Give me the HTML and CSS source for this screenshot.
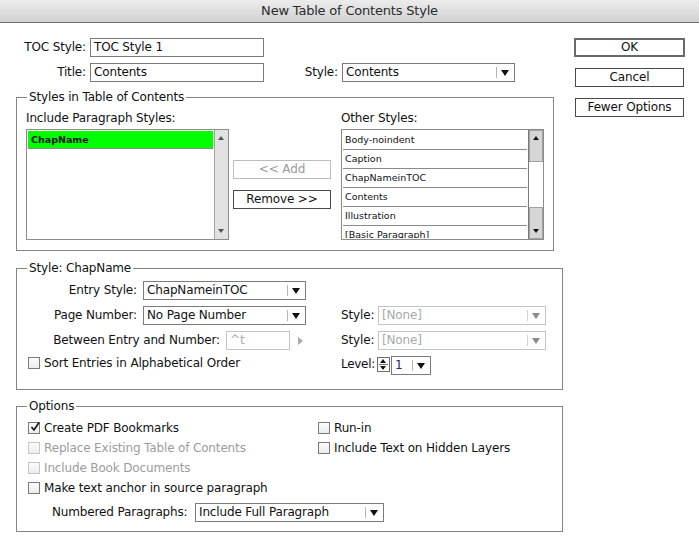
FILE: index.html
```html
<!DOCTYPE html>
<html>
<head>
<meta charset="utf-8">
<link rel="stylesheet" href="styles.css">
</head>
<body>
<div class="titlebar">New Table of Contents Style</div>
<div class="dialog">
  <div class="main">
    <div class="toprow">
      <span class="lbl toplbl">TOC Style:</span>
      <div class="field w174">TOC Style 1</div>
    </div>
    <div class="toprow second">
      <span class="lbl toplbl">Title:</span>
      <div class="field w174">Contents</div>
      <span class="lbl stylelbl">Style:</span>
      <div class="select w173"><span class="val">Contents</span><span class="sep"></span><span class="tri"></span></div>
    </div>

    <fieldset class="group g1">
      <legend>Styles in Table of Contents</legend>
      <div class="g1-inner">
        <div class="listcol">
          <div class="cap">Include Paragraph Styles:</div>
          <div class="list">
            <div class="items">
              <div class="item sel">ChapName</div>
            </div>
            <div class="sbar light">
              <span class="sarrow up"></span>
              <span class="sarrow down"></span>
            </div>
          </div>
        </div>
        <div class="midcol">
          <div class="btn disabled">&lt;&lt; Add</div>
          <div class="btn">Remove &gt;&gt;</div>
        </div>
        <div class="listcol right">
          <div class="cap">Other Styles:</div>
          <div class="list">
            <div class="items">
              <div class="item">Body-noindent</div>
              <div class="item">Caption</div>
              <div class="item">ChapNameinTOC</div>
              <div class="item">Contents</div>
              <div class="item">Illustration</div>
              <div class="item partial">[Basic Paragraph]</div>
            </div>
            <div class="sbar classic">
              <div class="seg top"><span class="sarrow up dark"></span></div>
              <div class="seg mid"></div>
              <div class="seg bot"><span class="sarrow down dark"></span></div>
            </div>
          </div>
        </div>
      </div>
    </fieldset>

    <fieldset class="group g2">
      <legend>Style: ChapName</legend>
      <div class="g2-inner">
        <div class="row">
          <div class="lcol">
            <span class="lbl l120">Entry Style:</span>
            <div class="select w163"><span class="val">ChapNameinTOC</span><span class="sep"></span><span class="tri"></span></div>
          </div>
        </div>
        <div class="row">
          <div class="lcol">
            <span class="lbl l120">Page Number:</span>
            <div class="select w163"><span class="val">No Page Number</span><span class="sep"></span><span class="tri"></span></div>
          </div>
          <div class="rcol">
            <span class="lbl l37">Style:</span>
            <div class="select w168 off"><span class="val">[None]</span><span class="sep"></span><span class="tri"></span></div>
          </div>
        </div>
        <div class="row">
          <div class="lcol">
            <span class="lbl l203">Between Entry and Number:</span>
            <div class="field w64 off">^t</div>
            <span class="rtri"></span>
          </div>
          <div class="rcol">
            <span class="lbl l37">Style:</span>
            <div class="select w168 off"><span class="val">[None]</span><span class="sep"></span><span class="tri"></span></div>
          </div>
        </div>
        <div class="row last">
          <div class="lcol chk-l">
            <label class="chk"><span class="box"></span>Sort Entries in Alphabetical Order</label>
          </div>
          <div class="rcol">
            <span class="lbl l36">Level:</span>
            <span class="spin"><span class="su"></span><span class="sd"></span></span>
            <div class="select w40 small"><span class="val num">1</span><span class="sep"></span><span class="tri"></span></div>
          </div>
        </div>
      </div>
    </fieldset>

    <fieldset class="group g3">
      <legend>Options</legend>
      <div class="g3-inner">
        <div class="opts">
          <div class="optcol first">
            <label class="chk"><span class="box checked"><svg width="12" height="12" viewBox="0 0 12 12"><path d="M2.5 6 L5 9 L10 1.5" fill="none" stroke="#111" stroke-width="1.6"/></svg></span>Create PDF Bookmarks</label>
            <label class="chk off"><span class="box"></span>Replace Existing Table of Contents</label>
            <label class="chk off"><span class="box"></span>Include Book Documents</label>
            <label class="chk"><span class="box"></span>Make text anchor in source paragraph</label>
          </div>
          <div class="optcol second">
            <label class="chk"><span class="box"></span>Run-in</label>
            <label class="chk"><span class="box"></span>Include Text on Hidden Layers</label>
          </div>
        </div>
        <div class="numrow">
          <span class="lbl">Numbered Paragraphs:</span>
          <div class="select w189"><span class="val">Include Full Paragraph</span><span class="sep"></span><span class="tri"></span></div>
        </div>
      </div>
    </fieldset>
  </div>

  <div class="buttons">
    <div class="btn dflt">OK</div>
    <div class="btn side">Cancel</div>
    <div class="btn side">Fewer Options</div>
  </div>
</div>
</body>
</html>
```

FILE: styles.css
```css
* { box-sizing: border-box; }
html, body { margin: 0; padding: 0; }
body {
  background: #ffffff;
  font-family: "DejaVu Sans", "Liberation Sans", sans-serif;
  font-size: 12px;
  letter-spacing: -0.15px;
  color: #111;
  width: 699px;
  height: 558px;
  overflow: hidden;
}
.titlebar {
  height: 23px;
  background: linear-gradient(#ececec, #d2d2d2);
  border-bottom: 1px solid #6e6e6e;
  text-align: center;
  font-size: 13px;
  letter-spacing: -0.2px;
  line-height: 22px;
  color: #2c2c2c;
}
.dialog { display: flex; }
.main { width: 563px; padding: 15px 0 0 16px; }
.lbl { line-height: 19px; white-space: nowrap; }

.toprow { display: flex; align-items: center; height: 19px; }
.toprow.second { margin-top: 6px; }
.toplbl { width: 70px; text-align: right; margin-right: 4px; }
.stylelbl { width: 74px; text-align: right; margin-right: 4px; }

.field {
  height: 19px;
  border: 1px solid #7b7b7b;
  background: #fff;
  padding-left: 3px;
  line-height: 17px;
  white-space: nowrap;
  overflow: hidden;
}
.field.off { border-color: #c4c4c4; color: #aaa; }
.w174 { width: 174px; }
.w64 { width: 64px; }

.select {
  position: relative;
  height: 19px;
  border: 1px solid #7b7b7b;
  background: #fff;
  line-height: 17px;
  padding-left: 3px;
  white-space: nowrap;
}
.select .sep {
  position: absolute;
  right: 17px;
  top: 3px;
  width: 1px;
  height: 11px;
  background: #b5b5b5;
}
.select .tri {
  position: absolute;
  right: 5px;
  top: 6px;
  width: 0; height: 0;
  border-left: 4px solid transparent;
  border-right: 4px solid transparent;
  border-top: 6px solid #111;
}
.select.off { border-color: #c4c4c4; color: #a8a8a8; }
.select.off .tri { border-top-color: #8a8a8a; }
.select.off .sep { background: #d0d0d0; }
.w173 { width: 173px; }
.w163 { width: 163px; }
.w168 { width: 168px; }
.w40 { width: 40px; }
.w189 { width: 189px; }
.num { color: #1a2a80; }

/* group boxes */
.group {
  margin: 0;
  padding: 0;
  border: 1px solid #858585;
  min-width: 0;
}
.group legend {
  margin-left: 10px;
  padding: 0 2px;
  font-size: 12px;
  line-height: 15px;
}
.g1 { width: 538px; margin-top: 8px; }
.g2, .g3 { width: 547px; margin-top: 10px; }
.g3 { margin-top: 9px; }

.g1-inner { display: flex; padding: 6px 9px 10px 9px; }
.listcol { width: 203px; flex: none; }
.listcol.right { margin-left: 10px; }
.cap { line-height: 15px; margin-bottom: 3px; }
.list {
  height: 111px;
  border: 1px solid #8c8c8c;
  display: flex;
  padding: 1px 0 1px 1px;
  background: #fff;
}
.items { flex: 1; overflow: hidden; }
.item {
  height: 19px;
  border-bottom: 1px solid #8a8a8a;
  font-size: 9.5px;
  letter-spacing: 0;
  line-height: 18px;
  padding-left: 2px;
  white-space: nowrap;
  margin-right: 1px;
}
.item.partial { height: 14px; border-bottom: 0; line-height: 17px; overflow: hidden; }
.item.sel {
  background: #00ff00;
  height: 18px;
  font-weight: bold;
  line-height: 17px;
  padding-left: 3px;
}
.sbar {
  width: 14px;
  position: relative;
  margin-top: -1px;
  margin-bottom: -1px;
}
.sbar.light {
  background: #e2e2e2;
  border-left: 1px solid #a5a5a5;
}
.sbar.classic {
  display: flex;
  flex-direction: column;
  border: 1px solid #7a7a7a;
  border-width: 0 0 0 1px;
  background: #fff;
  width: 15px;
}
.seg { position: relative; }
.seg.top, .seg.bot {
  height: 32px;
  background: #d6d6d6;
  border: 1px solid #a0a0a0;
}
.seg.mid { flex: 1; background: #fff; }
.sarrow {
  position: absolute;
  left: 3px;
  width: 0; height: 0;
  border-left: 3.5px solid transparent;
  border-right: 3.5px solid transparent;
}
.sarrow.up { top: 6px; border-bottom: 4px solid #555; }
.sarrow.down { bottom: 6px; border-top: 4px solid #555; }
.sarrow.dark.up { border-bottom-color: #111; top: 5px; }
.sarrow.dark.down { border-top-color: #111; bottom: 5px; }

.midcol { width: 98px; margin-left: 4px; padding-top: 49px; flex: none; }
.btn {
  height: 19px;
  border: 1px solid #4a4a4a;
  text-align: center;
  line-height: 17px;
  font-size: 12px;
  background: #fff;
  white-space: nowrap;
}
.midcol .btn + .btn { margin-top: 11px; }
.btn.disabled { border-color: #bdbdbd; color: #9a9a9a; }

/* group 2 */
.g2-inner { padding: 5px 0 15px 0; }
.row { display: flex; height: 19px; }
.row + .row { margin-top: 6px; }
.lcol { width: 324px; display: flex; align-items: center; flex: none; }
.rcol { display: flex; align-items: center; }
.l120 { width: 120px; text-align: right; margin-right: 6px; }
.l203 { width: 203px; text-align: right; margin-right: 6px; }
.l37 { width: 37px; }
.l36 { width: 36px; letter-spacing: -0.3px; }
.rtri {
  margin-left: 8px;
  width: 0; height: 0;
  border-top: 4px solid transparent;
  border-bottom: 4px solid transparent;
  border-left: 5px solid #a8a8a8;
}
.row.last { margin-top: 6px; height: 18px; }
.chk-l { padding-left: 11px; align-items: flex-start; }
.chk-l .chk { height: 13px; }
.row.last .rcol { align-items: flex-start; }
.row.last .lbl { line-height: 17px; }
.spin {
  position: relative;
  width: 13px;
  height: 15px;
  margin-top: 1px;
  border: 1px solid #6e6e6e;
  margin-right: 1px;
  background: #fff;
}
.spin::after {
  content: "";
  position: absolute;
  left: 1px; right: 1px; top: 6px;
  height: 1px;
  background: #6e6e6e;
}
.spin .su, .spin .sd {
  position: absolute;
  left: 2px;
  width: 0; height: 0;
  border-left: 3.5px solid transparent;
  border-right: 3.5px solid transparent;
}
.spin .su { top: 1px; border-bottom: 4px solid #111; }
.spin .sd { bottom: 1px; border-top: 4px solid #111; }

/* checkboxes */
.chk { display: flex; align-items: center; height: 20px; white-space: nowrap; }
.chk .box {
  width: 12px; height: 12px;
  border: 1px solid #7a7a7a;
  background: linear-gradient(#fdfdfd, #ececec);
  margin-right: 4px;
  position: relative;
  flex: none;
}
.chk .box svg { position: absolute; left: 0; top: -2px; }
.chk.off { color: #9c9c9c; }
.chk.off .box { border-color: #c6c6c6; }

/* group 3 */
.g3-inner { padding: 4px 0 9px 11px; }
.opts { display: flex; }
.optcol.first { width: 290px; flex: none; }
.optcol.second { flex: 1; }
.numrow { display: flex; align-items: center; margin-top: 5px; padding-left: 24px; }
.numrow .lbl { width: 143px; }

/* side buttons */
.buttons { padding: 15px 0 0 11px; }
.btn.dflt { width: 111px; border: 2px solid #6a6a6a; line-height: 15px; }
.btn.side { width: 109px; margin-left: 1px; margin-top: 11px; }
```
